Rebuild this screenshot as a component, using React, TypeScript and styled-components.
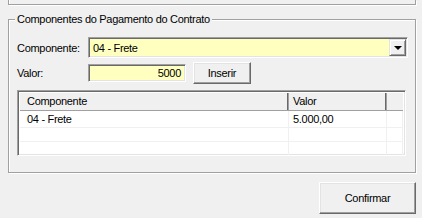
import React from 'react';
import styled, { createGlobalStyle } from 'styled-components';

const GlobalStyle = createGlobalStyle`
  html, body {
    margin: 0;
    padding: 0;
    background: #f0f0f0;
  }
  body {
    font-family: "Liberation Sans", Arial, sans-serif;
    font-size: 11px;
    letter-spacing: -0.3px;
    color: #000;
  }
`;

const Window = styled.div`
  width: 422px;
  height: 218px;
  box-sizing: border-box;
  padding: 0 6px 0 8px;
  display: flex;
  flex-direction: column;
  overflow: hidden;
  background: #f0f0f0;
`;

const TopPanel = styled.div`
  height: 4px;
  border: 1px solid #a0a0a0;
  border-top: none;
  box-shadow: 1px 1px 0 #fff, inset 1px 0 0 #fff;
`;

const GroupBox = styled.div`
  position: relative;
  margin-top: 14px;
  padding: 17px 7px 16px 8px;
  border: 1px solid #a0a0a0;
  box-shadow: inset 1px 1px 0 #fff, 1px 1px 0 #fff;
  display: flex;
  flex-direction: column;
`;

const Legend = styled.span`
  position: absolute;
  top: -7px;
  left: 6px;
  padding: 0 2px;
  line-height: 13px;
  background: #f0f0f0;
  white-space: nowrap;
`;

const Row = styled.div<{ $gap?: number }>`
  display: flex;
  align-items: center;
  margin-top: ${p => p.$gap ?? 0}px;
`;

const Label = styled.span`
  width: 71px;
  flex-shrink: 0;
  white-space: nowrap;
`;

const sunken = `
  box-sizing: border-box;
  border: 1px solid;
  border-color: #a0a0a0 #fff #fff #a0a0a0;
  box-shadow: inset 1px 1px 0 #696969, inset -1px -1px 0 #e3e3e3;
`;

const Combo = styled.div`
  ${sunken}
  flex: 1;
  height: 21px;
  background: #ffffc0;
  display: flex;
  align-items: center;
  padding: 2px 1px 2px 4px;
`;

const ComboText = styled.span`
  flex: 1;
  white-space: nowrap;
`;

const DropButton = styled.div`
  box-sizing: border-box;
  width: 17px;
  height: 17px;
  background: #f0f0f0;
  border: 1px solid;
  border-color: #e3e3e3 #696969 #696969 #e3e3e3;
  box-shadow: inset 1px 1px 0 #fff, inset -1px -1px 0 #a0a0a0;
  display: flex;
  align-items: center;
  justify-content: center;
`;

const Arrow = styled.span`
  width: 0;
  height: 0;
  border-left: 4px solid transparent;
  border-right: 4px solid transparent;
  border-top: 4px solid #000;
  margin-top: 1px;
`;

const ValueInput = styled.div`
  ${sunken}
  width: 98px;
  height: 18px;
  background: #ffffc0;
  text-align: right;
  padding: 0 4px;
  line-height: 16px;
`;

const Button = styled.div<{ $w: number; $h: number }>`
  box-sizing: border-box;
  width: ${p => p.$w}px;
  height: ${p => p.$h}px;
  background: #f0f0f0;
  border: 1px solid;
  border-color: #fff #696969 #696969 #fff;
  box-shadow: inset -1px -1px 0 #a0a0a0, inset 1px 1px 0 #e3e3e3;
  display: flex;
  align-items: center;
  justify-content: center;
`;

const InsertButton = styled(Button)`
  margin-left: 7px;
`;

const ConfirmButton = styled(Button)`
  align-self: flex-end;
  margin-top: 9px;
`;

const ListView = styled.div`
  ${sunken}
  margin-top: 6px;
  margin-right: 2px;
  height: 66px;
  padding: 2px;
  background: #fff;
  overflow: hidden;
`;

const columns = '269px 98px 1fr';

const Header = styled.div`
  display: grid;
  grid-template-columns: ${columns};
  height: 17px;
  background: #f0f0f0;
  border-bottom: 1px solid #a0a0a0;
`;

const HeaderCell = styled.div<{ $pad: number; $last?: boolean }>`
  padding-left: ${p => p.$pad}px;
  line-height: 16px;
  border-right: ${p => (p.$last ? 'none' : '1px solid #a0a0a0')};
  box-shadow: ${p => (p.$last ? 'none' : 'inset -1px 0 0 #696969')};
  white-space: nowrap;
`;

const ItemRow = styled.div<{ $h: number }>`
  display: grid;
  grid-template-columns: ${columns};
  height: ${p => p.$h}px;
  border-bottom: 1px solid #f0f0f0;
  box-sizing: border-box;
`;

const Cell = styled.div<{ $pad: number }>`
  padding-left: ${p => p.$pad}px;
  border-right: 1px solid #f0f0f0;
  display: flex;
  align-items: center;
  white-space: nowrap;
`;

const rows = [
  { comp: '04 - Frete', valor: '5.000,00', h: 17 },
  { comp: '', valor: '', h: 14 },
  { comp: '', valor: '', h: 14 },
];

export default function App() {
  return (
    <>
      <GlobalStyle />
      <Window>
        <TopPanel />
        <GroupBox>
          <Legend>Componentes do Pagamento do Contrato</Legend>
          <Row>
            <Label>Componente:</Label>
            <Combo>
              <ComboText>04 - Frete</ComboText>
              <DropButton>
                <Arrow />
              </DropButton>
            </Combo>
          </Row>
          <Row $gap={4}>
            <Label>Valor:</Label>
            <ValueInput>5000</ValueInput>
            <InsertButton $w={58} $h={22}>Inserir</InsertButton>
          </Row>
          <ListView>
            <Header>
              <HeaderCell $pad={7}>Componente</HeaderCell>
              <HeaderCell $pad={4}>Valor</HeaderCell>
              <HeaderCell $pad={0} $last />
            </Header>
            {rows.map((r, i) => (
              <ItemRow key={i} $h={r.h}>
                <Cell $pad={7}>{r.comp}</Cell>
                <Cell $pad={4}>{r.valor}</Cell>
                <Cell $pad={0} />
              </ItemRow>
            ))}
          </ListView>
        </GroupBox>
        <ConfirmButton $w={97} $h={32}>Confirmar</ConfirmButton>
      </Window>
    </>
  );
}
